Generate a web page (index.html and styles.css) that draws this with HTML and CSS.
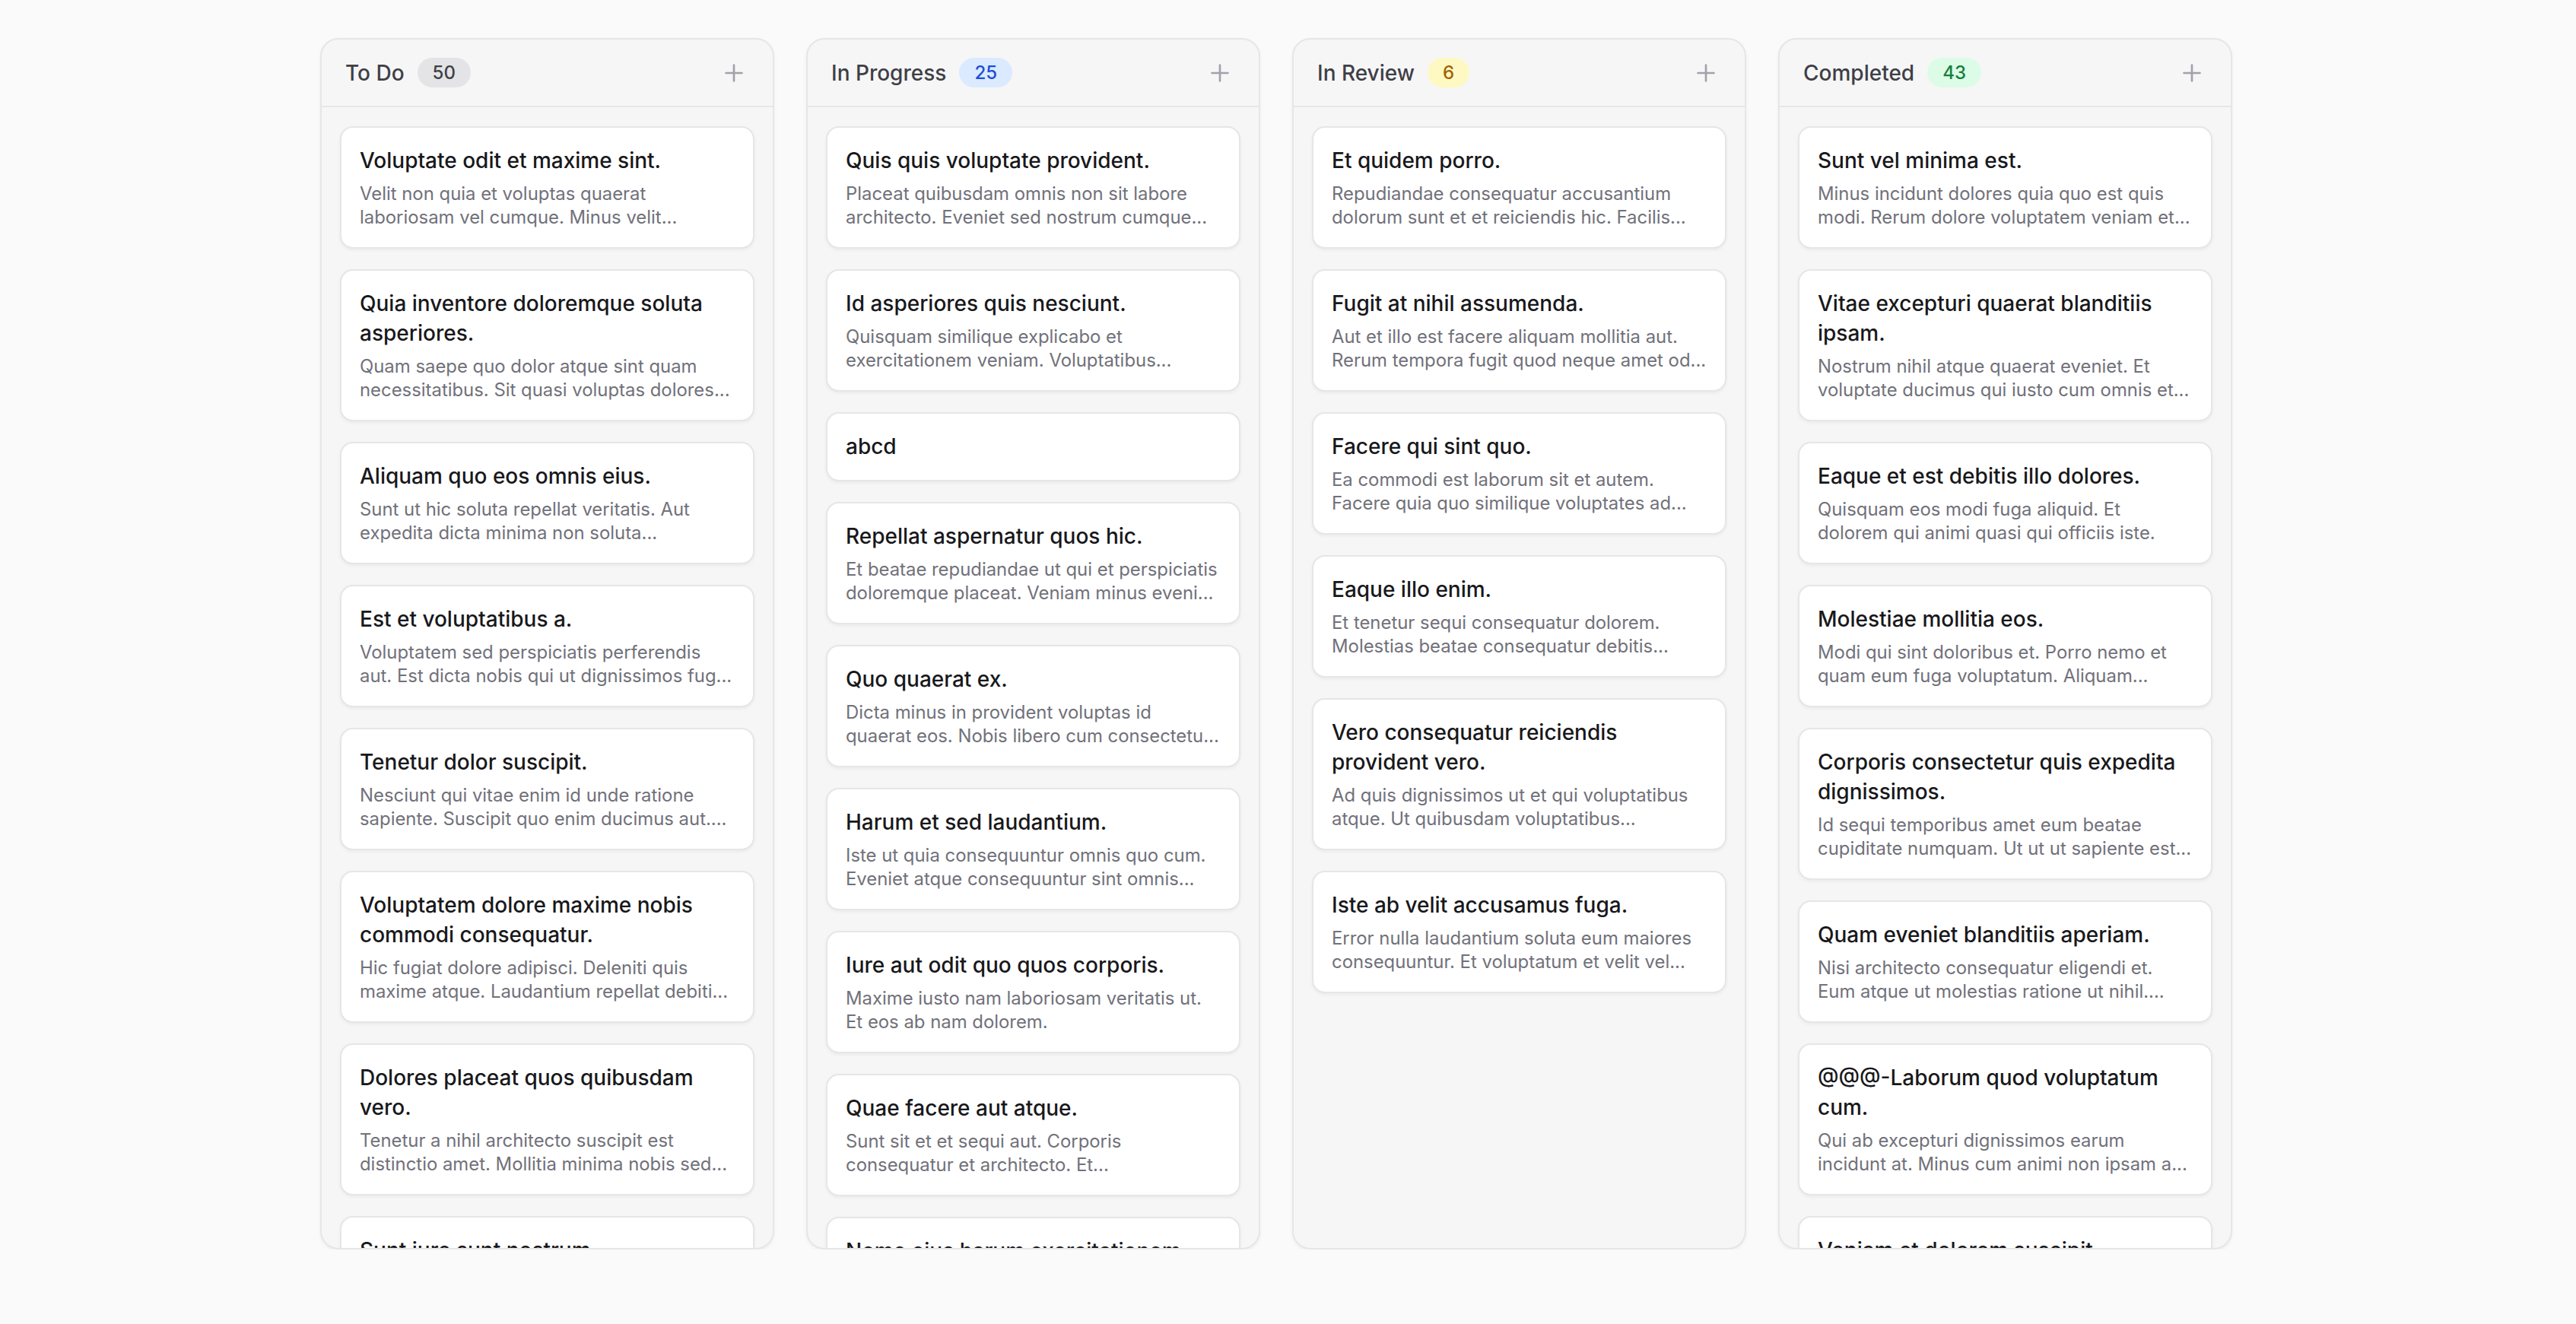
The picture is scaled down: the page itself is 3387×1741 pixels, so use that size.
FILE: index.html
```html
<!DOCTYPE html>
<html lang="en">
<head>
<meta charset="utf-8">
<title>Board</title>
<link rel="stylesheet" href="styles.css">
</head>
<body>
<main class="board">

  <section class="column">
    <header class="column-head">
      <h2 class="column-title">To Do</h2>
      <span class="count count-gray">50</span>
      <button class="add" type="button" aria-label="Add task">
        <svg viewBox="0 0 24 24"><path d="M12 1.5v21M1.5 12h21"/></svg>
      </button>
    </header>
    <div class="cards">
      <article class="card"><h3>Voluptate odit et maxime sint.</h3><p>Velit non quia et voluptas quaerat laboriosam vel cumque. Minus velit...</p></article>
      <article class="card"><h3>Quia inventore doloremque soluta asperiores.</h3><p>Quam saepe quo dolor atque sint quam necessitatibus. Sit quasi voluptas dolores...</p></article>
      <article class="card"><h3>Aliquam quo eos omnis eius.</h3><p>Sunt ut hic soluta repellat veritatis. Aut expedita dicta minima non soluta...</p></article>
      <article class="card"><h3>Est et voluptatibus a.</h3><p>Voluptatem sed perspiciatis perferendis aut. Est dicta nobis qui ut dignissimos fug...</p></article>
      <article class="card"><h3>Tenetur dolor suscipit.</h3><p>Nesciunt qui vitae enim id unde ratione sapiente. Suscipit quo enim ducimus aut....</p></article>
      <article class="card"><h3>Voluptatem dolore maxime nobis commodi consequatur.</h3><p>Hic fugiat dolore adipisci. Deleniti quis maxime atque. Laudantium repellat debiti...</p></article>
      <article class="card"><h3>Dolores placeat quos quibusdam vero.</h3><p>Tenetur a nihil architecto suscipit est distinctio amet. Mollitia minima nobis sed...</p></article>
      <article class="card"><h3>Sunt iure sunt nostrum.</h3><p>Omnis voluptas dolorem ut quia. Sed aut illum quia ipsa tempore...</p></article>
    </div>
  </section>

  <section class="column">
    <header class="column-head">
      <h2 class="column-title">In Progress</h2>
      <span class="count count-blue">25</span>
      <button class="add" type="button" aria-label="Add task">
        <svg viewBox="0 0 24 24"><path d="M12 1.5v21M1.5 12h21"/></svg>
      </button>
    </header>
    <div class="cards">
      <article class="card"><h3>Quis quis voluptate provident.</h3><p>Placeat quibusdam omnis non sit labore architecto. Eveniet sed nostrum cumque...</p></article>
      <article class="card"><h3>Id asperiores quis nesciunt.</h3><p>Quisquam similique explicabo et exercitationem veniam. Voluptatibus...</p></article>
      <article class="card"><h3>abcd</h3></article>
      <article class="card"><h3>Repellat aspernatur quos hic.</h3><p>Et beatae repudiandae ut qui et perspiciatis doloremque placeat. Veniam minus eveni...</p></article>
      <article class="card"><h3>Quo quaerat ex.</h3><p>Dicta minus in provident voluptas id quaerat eos. Nobis libero cum consectetu...</p></article>
      <article class="card"><h3>Harum et sed laudantium.</h3><p>Iste ut quia consequuntur omnis quo cum. Eveniet atque consequuntur sint omnis...</p></article>
      <article class="card"><h3>Iure aut odit quo quos corporis.</h3><p>Maxime iusto nam laboriosam veritatis ut. Et eos ab nam dolorem.</p></article>
      <article class="card"><h3>Quae facere aut atque.</h3><p>Sunt sit et et sequi aut. Corporis consequatur et architecto. Et...</p></article>
      <article class="card"><h3>Nemo eius harum exercitationem.</h3><p>Quia dolorem aut eos voluptas. Nihil sunt est quo...</p></article>
    </div>
  </section>

  <section class="column">
    <header class="column-head">
      <h2 class="column-title">In Review</h2>
      <span class="count count-yellow">6</span>
      <button class="add" type="button" aria-label="Add task">
        <svg viewBox="0 0 24 24"><path d="M12 1.5v21M1.5 12h21"/></svg>
      </button>
    </header>
    <div class="cards">
      <article class="card"><h3>Et quidem porro.</h3><p>Repudiandae consequatur accusantium dolorum sunt et et reiciendis hic. Facilis...</p></article>
      <article class="card"><h3>Fugit at nihil assumenda.</h3><p>Aut et illo est facere aliquam mollitia aut. Rerum tempora fugit quod neque amet od...</p></article>
      <article class="card"><h3>Facere qui sint quo.</h3><p>Ea commodi est laborum sit et autem. Facere quia quo similique voluptates ad...</p></article>
      <article class="card"><h3>Eaque illo enim.</h3><p>Et tenetur sequi consequatur dolorem. Molestias beatae consequatur debitis...</p></article>
      <article class="card"><h3>Vero consequatur reiciendis provident vero.</h3><p>Ad quis dignissimos ut et qui voluptatibus atque. Ut quibusdam voluptatibus...</p></article>
      <article class="card"><h3>Iste ab velit accusamus fuga.</h3><p>Error nulla laudantium soluta eum maiores consequuntur. Et voluptatum et velit vel...</p></article>
    </div>
  </section>

  <section class="column">
    <header class="column-head">
      <h2 class="column-title">Completed</h2>
      <span class="count count-green">43</span>
      <button class="add" type="button" aria-label="Add task">
        <svg viewBox="0 0 24 24"><path d="M12 1.5v21M1.5 12h21"/></svg>
      </button>
    </header>
    <div class="cards">
      <article class="card"><h3>Sunt vel minima est.</h3><p>Minus incidunt dolores quia quo est quis modi. Rerum dolore voluptatem veniam et...</p></article>
      <article class="card"><h3>Vitae excepturi quaerat blanditiis ipsam.</h3><p>Nostrum nihil atque quaerat eveniet. Et voluptate ducimus qui iusto cum omnis et...</p></article>
      <article class="card"><h3>Eaque et est debitis illo dolores.</h3><p>Quisquam eos modi fuga aliquid. Et dolorem qui animi quasi qui officiis iste.</p></article>
      <article class="card"><h3>Molestiae mollitia eos.</h3><p>Modi qui sint doloribus et. Porro nemo et quam eum fuga voluptatum. Aliquam...</p></article>
      <article class="card"><h3>Corporis consectetur quis expedita dignissimos.</h3><p>Id sequi temporibus amet eum beatae cupiditate numquam. Ut ut ut sapiente est...</p></article>
      <article class="card"><h3>Quam eveniet blanditiis aperiam.</h3><p>Nisi architecto consequatur eligendi et. Eum atque ut molestias ratione ut nihil....</p></article>
      <article class="card"><h3>@@@-Laborum quod voluptatum cum.</h3><p>Qui ab excepturi dignissimos earum incidunt at. Minus cum animi non ipsam a...</p></article>
      <article class="card"><h3>Veniam et dolorem suscipit.</h3><p>Sed ut in voluptas eum. Aut harum dolorum est...</p></article>
    </div>
  </section>

</main>
</body>
</html>
```

FILE: styles.css
```css
* {
  box-sizing: border-box;
}

html, body {
  margin: 0;
  padding: 0;
  background: #fafafa;
}

body {
  font-family: Inter, "Noto Sans", sans-serif;
  color: #18181b;
  -webkit-font-smoothing: antialiased;
}

/* four fixed-width lanes, centred on the page */
.board {
  display: flex;
  gap: 42px;
  width: 2545px;
  margin: 0 auto;
  padding: 50px 30px 0 0;
}

.column {
  flex: 0 0 597px;
  height: 1593px;
  display: flex;
  flex-direction: column;
  background: #f6f6f7;
  border: 2px solid #e6e6e9;
  border-radius: 24px;
  box-shadow: 0 2px 5px rgba(0, 0, 0, 0.05);
  overflow: hidden;
}

.column-head {
  flex: 0 0 auto;
  height: 89px;
  display: flex;
  align-items: center;
  padding: 0 31px 0 31px;
  border-bottom: 2px solid #e6e6e9;
}

.column-title {
  margin: 0;
  font-size: 28px;
  font-weight: 500;
  color: #3f3f46;
  line-height: 40px;
}

.count {
  margin-left: 17px;
  height: 39px;
  padding: 0 20px;
  display: inline-flex;
  align-items: center;
  border-radius: 20px;
  font-size: 24px;
  font-weight: 500;
  line-height: 1;
}

.count-gray   { background: #e4e4e7; color: #3f3f46; }
.count-blue   { background: #dbeafe; color: #1d4ed8; }
.count-yellow { background: #fef9c3; color: #a16207; }
.count-green  { background: #dcfce7; color: #15803d; }

.add {
  margin-left: auto;
  width: 40px;
  height: 40px;
  padding: 0;
  border: 0;
  background: none;
  display: flex;
  align-items: center;
  justify-content: center;
  cursor: pointer;
}

.add svg {
  width: 24px;
  height: 24px;
  fill: none;
  stroke: #a1a1aa;
  stroke-width: 2.6;
  stroke-linecap: round;
}

.cards {
  flex: 1 1 auto;
  min-height: 0;
  overflow: hidden;
  display: flex;
  flex-direction: column;
  gap: 27px;
  padding: 25px 24px;
}

.card {
  flex: 0 0 auto;
  background: #ffffff;
  border: 2px solid #e6e6e9;
  border-radius: 17px;
  padding: 24px 24px;
  box-shadow: 0 2px 4px rgba(0, 0, 0, 0.05);
}

.card h3 {
  margin: 0;
  font-size: 28px;
  font-weight: 500;
  line-height: 39px;
  color: #18181b;
}

/* descriptions arrive pre-shortened; the clamp only guards the two-line height */
.card p {
  margin: 8px 0 0;
  font-size: 23.88px;
  line-height: 31px;
  color: #71717a;
  display: -webkit-box;
  -webkit-box-orient: vertical;
  -webkit-line-clamp: 2;
  overflow: hidden;
}
```
